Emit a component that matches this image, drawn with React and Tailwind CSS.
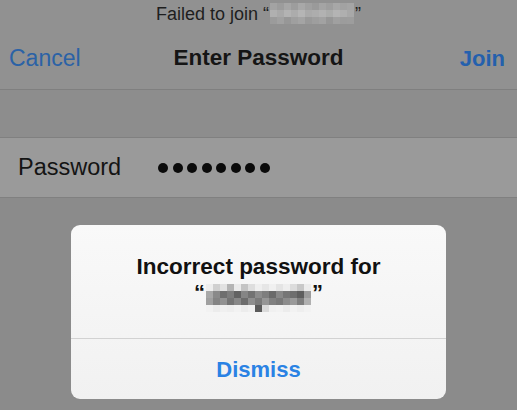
import React from "react";

const font = { fontFamily: '"Liberation Sans", Arial, sans-serif' };

// pixelated (blurred) network name
const Mosaic = ({ rows, size, className = "" }) => (
  <span className={`inline-flex flex-col align-middle ${className}`}>
    {rows.map((row, i) => (
      <span key={i} className="flex">
        {row.map((c, j) => (
          <span key={j} style={{ width: size, height: size, background: c }} />
        ))}
      </span>
    ))}
  </span>
);

const HEAD_ROWS = [
  ["#a3a3a3", "#9c9c9c", "#a6a6a6", "#9d9d9d", "#a8a8a8", "#a0a0a0", "#9a9a9a", "#a4a4a4", "#9e9e9e", "#a7a7a7", "#a2a2a2", "#a5a5a5"],
  ["#b0b0b0", "#a9a9a9", "#b3b3b3", "#acacac", "#b5b5b5", "#aaaaaa", "#adadad", "#b2b2b2", "#abacab", "#b4b4b4", "#afafaf", "#a8a8a8"],
  ["#9b9b9b", "#a1a1a1", "#979797", "#9f9f9f", "#a4a4a4", "#999999", "#9e9e9e", "#a2a2a2", "#969696", "#a0a0a0", "#9c9c9c", "#9d9d9d"],
];

const ALERT_ROWS = [
  ["#eeeeee", "#d0d0d0", "#e2e2e2", "#b4b4b4", "#eaeaea", "#c4c4c4", "#dedede", "#efefef", "#e6e6e6", "#f0f0f0", "#e4e4e4", "#eeeeee", "#dcdcdc", "#c8c8c8", "#ececec"],
  ["#a8a8a8", "#8a8a8a", "#6e6e6e", "#7c7c7c", "#626262", "#858585", "#727272", "#8c8c8c", "#7e7e7e", "#6a6a6a", "#888888", "#767676", "#6e6e6e", "#5e5e5e", "#9c9c9c"],
  ["#a0a0a0", "#848484", "#929292", "#747474", "#888888", "#6c6c6c", "#8e8e8e", "#7a7a7a", "#969696", "#808080", "#787878", "#8c8c8c", "#9a9a9a", "#7e7e7e", "#b0b0b0"],
  ["#f2f2f2", "#ececec", "#f0f0f0", "#eeeeee", "#f2f2f2", "#ececec", "#f0f0f0", "#5a5a5a", "#dadada", "#f0f0f0", "#f2f2f2", "#ececec", "#f2f2f2", "#eeeeee", "#f2f2f2"],
];

export default function App() {
  return (
    <div className="w-[517px] h-[410px] overflow-hidden bg-[#8b8b8b] flex flex-col" style={font}>
      {/* Header */}
      <div className="bg-[#919191]">
        <div className="h-[27px] flex items-center justify-center text-[18px] text-[#1e1e1e] leading-none">
          <span>Failed to join “</span>
          <Mosaic rows={HEAD_ROWS} size={7} className="mx-[1px]" />
          <span>”</span>
        </div>
        <div className="h-[62px] flex items-center justify-between pl-[9px] pr-[12px] relative">
          <span className="text-[23px] text-[#2b62a6]">Cancel</span>
          <span className="absolute left-0 right-0 text-center text-[22.5px] font-bold text-[#151515] pointer-events-none">
            Enter Password
          </span>
          <span className="text-[22px] font-bold text-[#2460ad]">Join</span>
        </div>
      </div>
      <div className="h-px bg-[#7f7f7f]" />

      {/* spacer band */}
      <div className="h-[47px] bg-[#8d8d8d]" />
      <div className="h-px bg-[#808080]" />

      {/* Password row */}
      <div className="h-[59px] bg-[#9a9a9a] flex items-center pl-[18px]">
        <span className="text-[23.5px] text-[#141414] w-[140px]">Password</span>
        <div className="flex gap-[4.5px]">
          {Array.from({ length: 8 }).map((_, i) => (
            <span key={i} className="w-[10px] h-[10px] rounded-full bg-[#0a0a0a]" />
          ))}
        </div>
      </div>
      <div className="h-px bg-[#808080]" />

      {/* Alert */}
      <div className="flex justify-center pt-[27px]">
        <div className="w-[375px] h-[174px] rounded-[9px] bg-gradient-to-b from-[#f9f9f9] to-[#f1f1f1] flex flex-col overflow-hidden">
          <div className="h-[113px] flex flex-col items-center pt-[29px] text-[#111]">
            <span className="text-[22.5px] font-bold leading-[26px]">Incorrect password for</span>
            <div className="flex items-center mt-[4px] text-[22px] font-bold leading-none">
              <span className="mt-[-10px]">“</span>
              <Mosaic rows={ALERT_ROWS} size={7} className="mx-[1px]" />
              <span className="mt-[-10px]">”</span>
            </div>
          </div>
          <div className="h-px bg-[#d2d2d2]" />
          <div className="flex-1 flex items-center justify-center">
            <span className="text-[22px] font-bold text-[#2a82e4]">Dismiss</span>
          </div>
        </div>
      </div>
    </div>
  );
}
